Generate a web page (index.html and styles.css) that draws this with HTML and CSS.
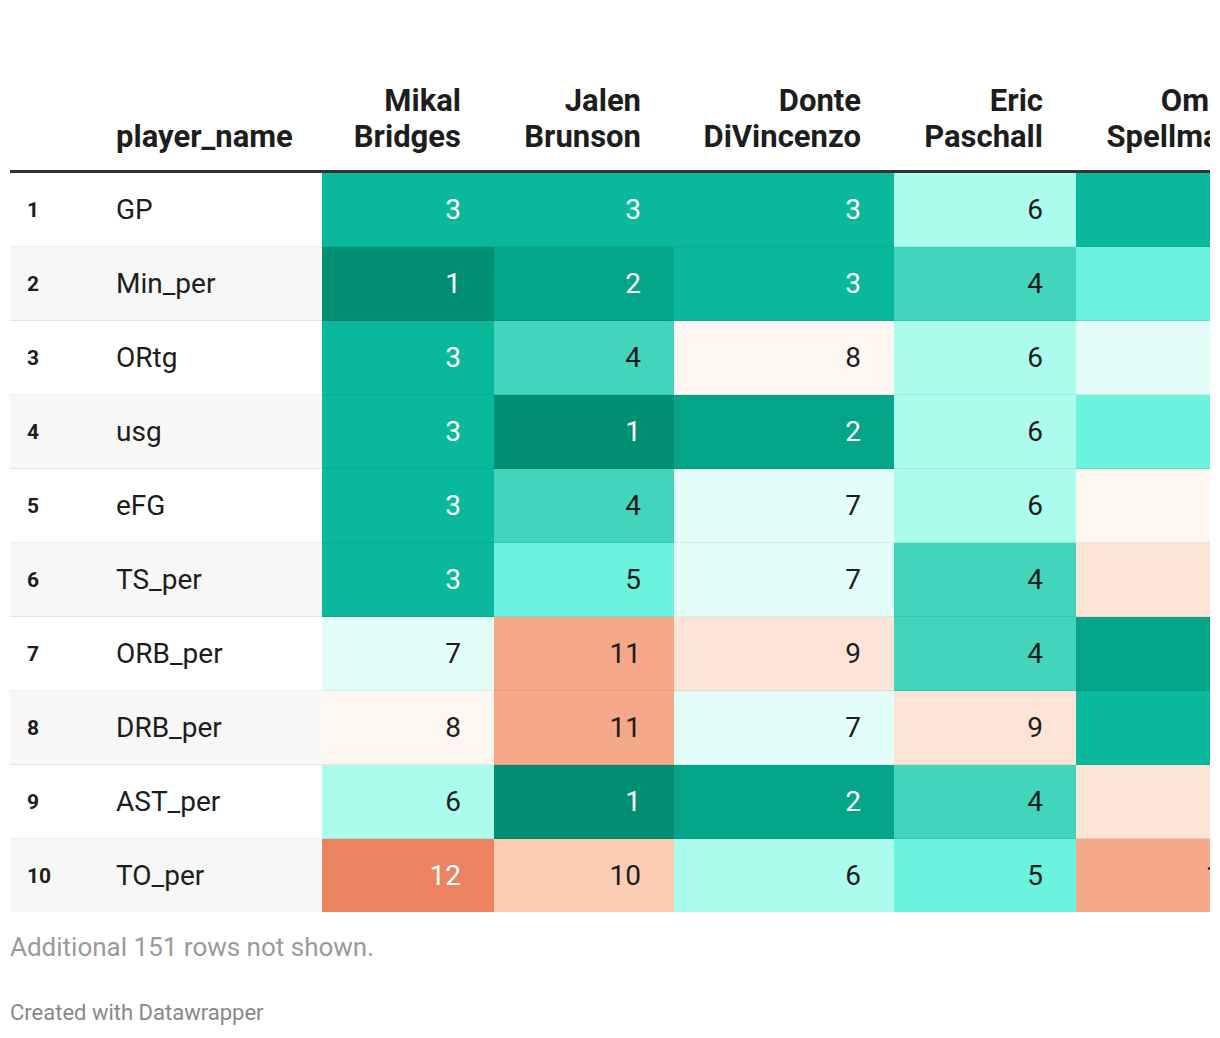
FILE: index.html
```html
<!DOCTYPE html>
<html>
<head>
<meta charset="utf-8">
<link rel="stylesheet" href="styles.css">
</head>
<body>
<div class="chart">
  <div class="table-wrap">
    <table class="dw-table">
      <colgroup>
        <col class="c-idx"><col class="c-name"><col class="c-mikal"><col class="c-jalen"><col class="c-donte"><col class="c-eric"><col class="c-omar">
      </colgroup>
      <thead>
        <tr>
          <th class="idx"></th>
          <th class="name">player_name</th>
          <th class="num">Mikal<br>Bridges</th>
          <th class="num">Jalen<br>Brunson</th>
          <th class="num">Donte<br>DiVincenzo</th>
          <th class="num">Eric<br>Paschall</th>
          <th class="num">Omar<br>Spellman</th>
        </tr>
      </thead>
      <tbody>
        <tr><td class="idx">1</td><td class="name">GP</td><td class="num v3">3</td><td class="num v3">3</td><td class="num v3">3</td><td class="num v6">6</td><td class="num v3">3</td></tr>
        <tr class="even"><td class="idx">2</td><td class="name">Min_per</td><td class="num v1">1</td><td class="num v2">2</td><td class="num v3">3</td><td class="num v4">4</td><td class="num v5">5</td></tr>
        <tr><td class="idx">3</td><td class="name">ORtg</td><td class="num v3">3</td><td class="num v4">4</td><td class="num v8">8</td><td class="num v6">6</td><td class="num v7">7</td></tr>
        <tr class="even"><td class="idx">4</td><td class="name">usg</td><td class="num v3">3</td><td class="num v1">1</td><td class="num v2">2</td><td class="num v6">6</td><td class="num v5">5</td></tr>
        <tr><td class="idx">5</td><td class="name">eFG</td><td class="num v3">3</td><td class="num v4">4</td><td class="num v7">7</td><td class="num v6">6</td><td class="num v8">8</td></tr>
        <tr class="even"><td class="idx">6</td><td class="name">TS_per</td><td class="num v3">3</td><td class="num v5">5</td><td class="num v7">7</td><td class="num v4">4</td><td class="num v9">9</td></tr>
        <tr><td class="idx">7</td><td class="name">ORB_per</td><td class="num v7">7</td><td class="num v11">11</td><td class="num v9">9</td><td class="num v4">4</td><td class="num v2">2</td></tr>
        <tr class="even"><td class="idx">8</td><td class="name">DRB_per</td><td class="num v8">8</td><td class="num v11">11</td><td class="num v7">7</td><td class="num v9">9</td><td class="num v3">3</td></tr>
        <tr><td class="idx">9</td><td class="name">AST_per</td><td class="num v6">6</td><td class="num v1">1</td><td class="num v2">2</td><td class="num v4">4</td><td class="num v9">9</td></tr>
        <tr class="even last"><td class="idx">10</td><td class="name">TO_per</td><td class="num v12">12</td><td class="num v10">10</td><td class="num v6">6</td><td class="num v5">5</td><td class="num v11">11</td></tr>
      </tbody>
    </table>
  </div>
  <p class="note">Additional 151 rows not shown.</p>
  <p class="credit">Created with Datawrapper</p>
</div>
</body>
</html>
```
FILE: styles.css
```css
html, body {
  margin: 0;
  padding: 0;
  background: #ffffff;
}
body {
  font-family: Roboto, "Liberation Sans", sans-serif;
  color: #1d1d1d;
}
.chart {
  padding: 83px 10px 0 10px;
}
.table-wrap {
  width: 1200px;
  overflow: hidden;
}
.dw-table {
  border-collapse: separate;
  border-spacing: 0;
  table-layout: fixed;
  width: 1260px;
}
.c-idx { width: 106px; }
.c-name { width: 206px; }
.c-mikal { width: 172px; }
.c-jalen { width: 180px; }
.c-donte { width: 220px; }
.c-eric { width: 182px; }
.c-omar { width: 194px; }

.dw-table th {
  font-size: 31px;
  font-weight: 700;
  line-height: 36px;
  vertical-align: bottom;
  padding: 0 0 15px 0;
  border-bottom: 3px solid #333333;
  color: #1d1d1d;
  white-space: nowrap;
}
.dw-table th.name { text-align: left; }
.dw-table th.num { text-align: right; padding-right: 33px; }

.dw-table td {
  height: 73px;
  padding: 0;
  font-size: 28px;
  line-height: 32px;
  border-bottom: 1px solid rgba(0, 0, 0, 0.07);
  vertical-align: middle;
  white-space: nowrap;
}
.dw-table tr.last td { border-bottom: none; }
.dw-table tr.even td.idx,
.dw-table tr.even td.name { background: #f7f7f7; }
.dw-table td.idx {
  padding-left: 17px;
  font-size: 21px;
  font-weight: 700;
}
.dw-table td.name { text-align: left; }
.dw-table td.num {
  text-align: right;
  padding-right: 33px;
  color: #1d1d1d;
}

.v1 { background: #008f73; }
.v2 { background: #04a589; }
.v3 { background: #0ab89c; }
.v4 { background: #42d5bc; }
.v5 { background: #6bf3dd; }
.v6 { background: #acfcee; }
.v7 { background: #e3fef9; }
.v8 { background: #fef6f1; }
.v9 { background: #fee4d7; }
.v10 { background: #fbcdb4; }
.v11 { background: #f6a988; }
.v12 { background: #ec8360; }
.dw-table td.v1, .dw-table td.v2, .dw-table td.v3, .dw-table td.v12 { color: #ffffff; }

.note {
  margin: 20px 0 0 0;
  font-size: 26px;
  line-height: 30px;
  color: #9a9a9a;
}
.credit {
  margin: 38px 0 0 0;
  font-size: 22px;
  line-height: 26px;
  color: #888888;
}
```
